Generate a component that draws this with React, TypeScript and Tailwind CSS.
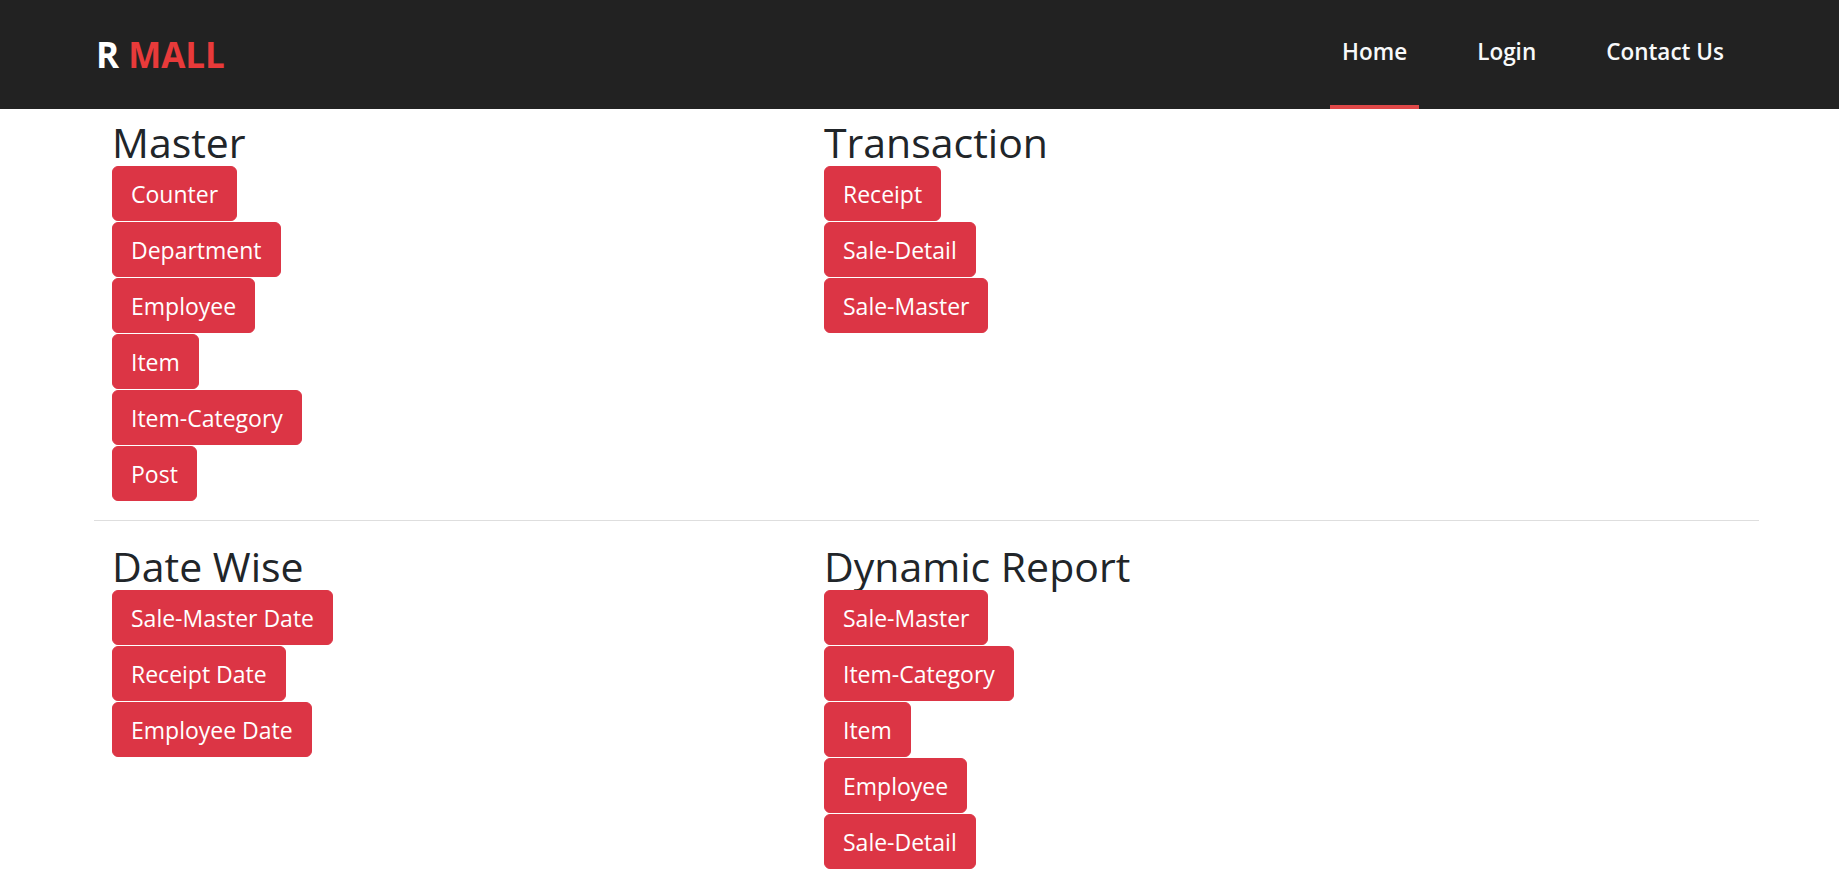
type Section = {
  title: string;
  links: string[];
};

const topRow: Section[] = [
  { title: 'Master', links: ['Counter', 'Department', 'Employee', 'Item', 'Item-Category', 'Post'] },
  { title: 'Transaction', links: ['Receipt', 'Sale-Detail', 'Sale-Master'] },
];

const bottomRow: Section[] = [
  { title: 'Date Wise', links: ['Sale-Master Date', 'Receipt Date', 'Employee Date'] },
  { title: 'Dynamic Report', links: ['Sale-Master', 'Item-Category', 'Item', 'Employee', 'Sale-Detail'] },
];

function Block({ section, wide }: { section: Section; wide?: boolean }) {
  return (
    <div className={wide ? 'w-[712px] shrink-0' : 'flex-1'}>
      <h2 className="text-[41px] leading-[48px] font-normal text-[#212529]">{section.title}</h2>
      <div className="flex flex-col items-start gap-px">
        {section.links.map((label) => (
          <button
            key={label}
            type="button"
            className="rounded-[6px] border border-[#dc3545] bg-[#dc3545] px-[18px] pt-[11px] pb-[9px] text-[23px] leading-[33px] text-white"
          >
            {label}
          </button>
        ))}
      </div>
    </div>
  );
}

export default function App() {
  return (
    <div className="min-h-screen bg-white font-['Open_Sans',sans-serif]">
      <nav className="flex h-[109px] items-center justify-between bg-[#222222] pl-[96px] pr-[103px]">
        <a href="#" className="text-[35px] font-bold leading-none">
          <span className="text-white">R </span>
          <span className="text-[#e83a3a]">MALL</span>
        </a>
        <ul className="flex h-full items-stretch gap-[46px]">
          <li className="flex items-center border-b-4 border-[#e04848] px-3">
            <a href="#" className="text-[22.5px] font-semibold leading-none text-[#f8f9fa]">Home</a>
          </li>
          <li className="flex items-center border-b-4 border-transparent px-3">
            <a href="#" className="text-[22.5px] font-semibold leading-none text-[#f8f9fa]">Login</a>
          </li>
          <li className="flex items-center border-b-4 border-transparent px-3">
            <a href="#" className="text-[22.5px] font-semibold leading-none text-[#f8f9fa]">Contact Us</a>
          </li>
        </ul>
      </nav>

      <div className="flex pl-[112px] pt-[9px]">
        <Block section={topRow[0]} wide />
        <Block section={topRow[1]} />
      </div>

      <hr className="ml-[94px] mt-[19px] w-[1665px] border-t border-[#dedede]" />

      <div className="flex pl-[112px] pt-[21px]">
        <Block section={bottomRow[0]} wide />
        <Block section={bottomRow[1]} />
      </div>
    </div>
  );
}
